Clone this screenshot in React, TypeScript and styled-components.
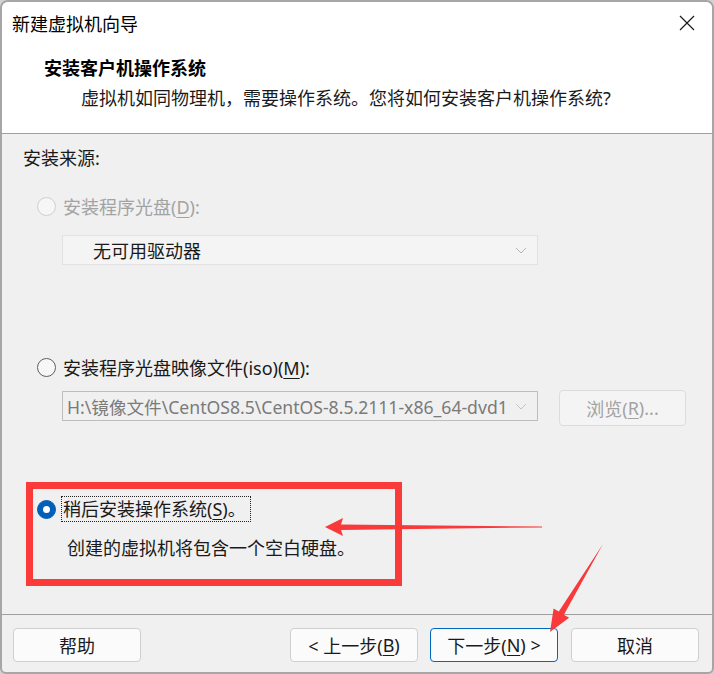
import React from "react";
import styled, { createGlobalStyle } from "styled-components";

const Global = createGlobalStyle`
  html, body { margin: 0; padding: 0; background: #d2d2d2; }
  body { font-family: "Noto Sans", "Noto Sans CJK SC", sans-serif; }
  * { box-sizing: border-box; }
`;

const Window = styled.div`
  position: relative;
  width: 714px;
  height: 674px;
  border: 2px solid #a6a6a6;
  border-radius: 8px 8px 6px 6px;
  overflow: hidden;
  background: #f0f0f0;
  display: flex;
  flex-direction: column;
  color: #1a1a1a;
  font-size: 18px;
`;

const Top = styled.div`
  background: #ffffff;
  height: 132px;
  border-bottom: 1px solid #a0a0a0;
  display: flex;
  flex-direction: column;
`;

const TitleBar = styled.div`
  height: 42px;
  display: flex;
  align-items: center;
  justify-content: space-between;
  padding: 0 16px 0 10px;
  font-size: 18px;
  color: #000;
`;

const CloseBtn = styled.div`
  width: 18px;
  height: 18px;
  display: flex;
  align-items: center;
  justify-content: center;
`;

const Header = styled.div`
  padding: 9px 0 0 42px;
`;

const HeaderTitle = styled.div`
  font-weight: 700;
  line-height: 30px;
  color: #000;
`;

const HeaderSub = styled.div`
  line-height: 30px;
  margin-left: 37px;
  color: #1a1a1a;
`;

const Body = styled.div`
  flex: 1;
  padding: 9px 0 0 21px;
  display: flex;
  flex-direction: column;
  align-items: flex-start;
`;

const SectionLabel = styled.div`
  line-height: 30px;
`;

const RadioRow = styled.div<{ $mt: number; $ml: number; $disabled?: boolean }>`
  display: flex;
  align-items: center;
  height: 30px;
  margin-top: ${(p) => p.$mt}px;
  margin-left: ${(p) => p.$ml}px;
  color: ${(p) => (p.$disabled ? "#a3a3a3" : "#1a1a1a")};
  gap: 7px;
`;

const Radio = styled.span<{ $state: "disabled" | "off" | "on" }>`
  width: 19px;
  height: 19px;
  border-radius: 50%;
  flex: none;
  display: flex;
  align-items: center;
  justify-content: center;
  border: 1px solid
    ${(p) => (p.$state === "disabled" ? "#cfcfcf" : p.$state === "off" ? "#5e5e5e" : "#005fb8")};
  background: ${(p) => (p.$state === "on" ? "#005fb8" : p.$state === "off" ? "#f7f7f7" : "#f6f6f6")};
  &::after {
    content: "";
    display: ${(p) => (p.$state === "on" ? "block" : "none")};
    width: 7px;
    height: 7px;
    border-radius: 50%;
    background: #fff;
  }
`;

const Key = styled.span`
  text-decoration: underline;
  text-underline-offset: 3px;
`;

const Select = styled.div<{ $muted?: boolean }>`
  width: 476px;
  height: 30px;
  border: 1px solid ${(p) => (p.$muted ? "#bdbdbd" : "#e2e2e2")};
  background: ${(p) => (p.$muted ? "#f0f0f0" : "#f4f4f4")};
  display: flex;
  align-items: center;
  padding: 0 8px 0 ${(p) => (p.$muted ? 4 : 30)}px;
  color: ${(p) => (p.$muted ? "#7a7a7a" : "#1a1a1a")};
  white-space: nowrap;
`;

const SelectText = styled.span<{ $small?: boolean }>`
  flex: 1;
  overflow: hidden;
  font-size: ${(p) => (p.$small ? 17.6 : 18)}px;
`;

const Chevron = styled.span`
  flex: none;
  width: 14px;
  margin-left: 6px;
  display: flex;
  align-items: center;
`;

const DriveSelect = styled(Select)`
  margin-top: 14px;
  margin-left: 39px;
`;

const IsoRow = styled.div`
  display: flex;
  align-items: flex-start;
  margin-top: 8px;
  margin-left: 39px;
  gap: 21px;
`;

const IsoSelect = styled(Select)`
  margin-top: 1px;
`;

const BrowseButton = styled.div`
  width: 127px;
  height: 36px;
  border: 1px solid #dcdcdc;
  border-radius: 4px;
  background: #f4f4f4;
  color: #a3a3a3;
  display: flex;
  align-items: center;
  justify-content: center;
`;

const Highlight = styled.div`
  margin-top: 56px;
  margin-left: 3px;
  width: 376px;
  height: 104px;
  border: 7px solid #fb3a3a;
  padding: 5px 0 0 4px;
  display: flex;
  flex-direction: column;
`;

const FocusLabel = styled.span`
  border: 1px dotted #222;
  line-height: 24px;
  padding: 0 4px 0 1px;
  margin-left: -2px;
`;

const Desc = styled.div`
  margin-top: 9px;
  margin-left: 30px;
  line-height: 30px;
`;

const Footer = styled.div`
  height: 58px;
  border-top: 1px solid #a0a0a0;
  display: flex;
  align-items: flex-start;
  padding: 13px 13px 0 11px;
`;

const Button = styled.div<{ $primary?: boolean; $ml?: number }>`
  width: 128px;
  height: 34px;
  margin-left: ${(p) => p.$ml ?? 0}px;
  border: 1px solid ${(p) => (p.$primary ? "#0067c0" : "#cfcfcf")};
  border-radius: 4px;
  background: #fbfbfb;
  display: flex;
  align-items: center;
  justify-content: center;
  color: #1a1a1a;
  white-space: pre;
`;

const Spacer = styled.div`
  flex: 1;
`;

const Overlay = styled.svg`
  position: absolute;
  left: -2px;
  top: -2px;
  pointer-events: none;
`;

const ChevronIcon = ({ color }: { color: string }) => (
  <svg width="12" height="7" viewBox="0 0 12 7">
    <path d="M1 1 L6 6 L11 1" fill="none" stroke={color} strokeWidth="1" />
  </svg>
);

export default function App() {
  return (
    <>
      <Global />
      <Window>
        <Top>
          <TitleBar>
            <span>新建虚拟机向导</span>
            <CloseBtn>
              <svg width="16" height="16" viewBox="0 0 16 16">
                <path d="M1 1 L15 15 M15 1 L1 15" stroke="#1a1a1a" strokeWidth="1.2" />
              </svg>
            </CloseBtn>
          </TitleBar>
          <Header>
            <HeaderTitle>安装客户机操作系统</HeaderTitle>
            <HeaderSub>虚拟机如同物理机，需要操作系统。您将如何安装客户机操作系统?</HeaderSub>
          </Header>
        </Top>
        <Body>
          <SectionLabel>安装来源:</SectionLabel>
          <RadioRow $mt={18} $ml={14} $disabled>
            <Radio $state="disabled" />
            <span>
              安装程序光盘(<Key>D</Key>):
            </span>
          </RadioRow>
          <DriveSelect>
            <SelectText>无可用驱动器</SelectText>
            <Chevron>
              <ChevronIcon color="#b4b4b4" />
            </Chevron>
          </DriveSelect>
          <RadioRow $mt={87} $ml={14}>
            <Radio $state="off" />
            <span>
              安装程序光盘映像文件(iso)(<Key>M</Key>):
            </span>
          </RadioRow>
          <IsoRow>
            <IsoSelect $muted>
              <SelectText $small>H:\镜像文件\CentOS8.5\CentOS-8.5.2111-x86_64-dvd1</SelectText>
              <Chevron>
                <ChevronIcon color="#c4c4c4" />
              </Chevron>
            </IsoSelect>
            <BrowseButton>
              浏览(<Key>R</Key>)...
            </BrowseButton>
          </IsoRow>
          <Highlight>
            <RadioRow $mt={0} $ml={0}>
              <Radio $state="on" />
              <FocusLabel>
                稍后安装操作系统(<Key>S</Key>)。
              </FocusLabel>
            </RadioRow>
            <Desc>创建的虚拟机将包含一个空白硬盘。</Desc>
          </Highlight>
        </Body>
        <Footer>
          <Button>帮助</Button>
          <Spacer />
          <Button>
            {"< 上一步("}
            <Key>B</Key>
            {")"}
          </Button>
          <Button $primary $ml={12}>
            {"下一步("}
            <Key>N</Key>
            {") >"}
          </Button>
          <Button $ml={13}>取消</Button>
        </Footer>
        <Overlay width="714" height="674" viewBox="0 0 714 674">
          <polygon
            points="325,527 343,518 341,524.5 542,526.6 542,527.4 341,530 343,536"
            fill="#f83a3a"
          />
          <polygon
            points="603,544 563.9,614.7 569.1,617.8 550,632 553.6,608.5 558.8,611.6"
            fill="#f83a3a"
          />
        </Overlay>
      </Window>
    </>
  );
}
